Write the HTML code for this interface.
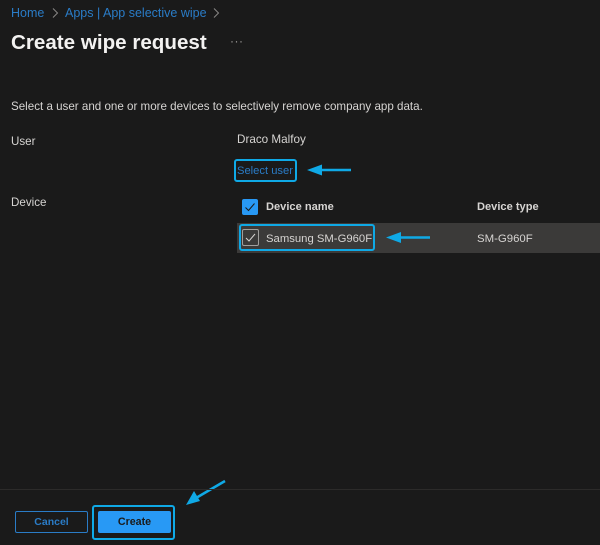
<!DOCTYPE html>
<html><head><meta charset="utf-8">
<style>
html,body{margin:0;padding:0;background:#1a1a1a;}
body{width:600px;height:545px;position:relative;overflow:hidden;font-family:"Liberation Sans",sans-serif;}
.t{position:absolute;white-space:nowrap;line-height:16px;font-size:11.6px;color:#d6d4d2;}
.b{position:absolute;box-sizing:border-box;}
</style></head>
<body>
<div class="t" style="left:11px;top:5px;font-size:12.5px;color:#2a7cc7;">Home</div>
<div class="t" style="left:65px;top:5px;font-size:12.5px;color:#2a7cc7;">Apps | App selective wipe</div>
<svg class="b" style="left:0;top:0" width="300" height="30"><path d="M53 8.500l4.500 4.500-4.500 4.500M214 8.500l4.500 4.500-4.500 4.500" fill="none" stroke="#8a8886" stroke-width="1"/></svg>
<div class="t" style="left:11px;top:30px;font-size:20.600px;line-height:26px;font-weight:bold;color:#f3f2f1;">Create wipe request</div>
<div class="t" style="left:230px;top:33px;font-size:12px;color:#a19f9d;letter-spacing:0.500px;">···</div>
<div class="t" style="left:11px;top:99px;">Select a user and one or more devices to selectively remove company app data.</div>
<div class="t" style="left:11px;top:134px;">User</div>
<div class="t" style="left:237px;top:131.500px;font-size:11.700px;">Draco Malfoy</div>
<div class="b" style="left:234px;top:159px;width:63px;height:23px;border:2px solid #0fa9e6;border-radius:3px;"></div>
<div class="t" style="left:237px;top:163px;font-size:11.200px;color:#2a7cc7;">Select user</div>
<div class="t" style="left:11px;top:195px;">Device</div>

<div class="b" style="left:242px;top:199px;width:16px;height:16px;background:#2899f5;border-radius:2px;"></div>
<svg class="b" style="left:242px;top:199px" width="16" height="16"><path d="M3.500 8.500l3 3 6-7" fill="none" stroke="#1a1a1a" stroke-width="1"/></svg>
<div class="t" style="left:266px;top:199px;font-size:11.100px;font-weight:bold;">Device name</div>
<div class="t" style="left:477px;top:199px;font-size:11.100px;font-weight:bold;">Device type</div>

<div class="b" style="left:237px;top:223px;width:363px;height:30px;background:#3b3a39;"></div>
<div class="b" style="left:239px;top:224px;width:136px;height:27px;border:2px solid #0fa9e6;border-radius:3px;"></div>
<div class="b" style="left:242px;top:229px;width:17px;height:17px;border:1px solid #a19f9d;border-radius:2px;"></div>
<svg class="b" style="left:242px;top:229px" width="17" height="17"><path d="M4 9l3 3 6-7" fill="none" stroke="#d6d4d2" stroke-width="1"/></svg>
<div class="t" style="left:266px;top:230.500px;font-size:11.300px;">Samsung SM-G960F</div>
<div class="t" style="left:477px;top:230.500px;font-size:11.400px;">SM-G960F</div>

<svg class="b" style="left:0;top:0" width="600" height="545">
<path d="M351 170H318" stroke="#0fa9e6" stroke-width="2.500" fill="none"/>
<path d="M307 170l15-5.500v11z" fill="#0fa9e6"/>
<path d="M430 237.500H397" stroke="#0fa9e6" stroke-width="2.500" fill="none"/>
<path d="M386 237.500l15-5.500v11z" fill="#0fa9e6"/>
<path d="M225 481L196 498" stroke="#0fa9e6" stroke-width="2.500" fill="none"/>
<path d="M186 505l8-14 6 10z" fill="#0fa9e6"/>
</svg>

<div class="b" style="left:0;top:489px;width:600px;height:1px;background:#2c2b2a;"></div>
<div class="b" style="left:15px;top:511px;width:73px;height:22px;border:1px solid #2a7cc7;border-radius:2px;"></div>
<div class="t" style="left:15px;top:514px;width:73px;text-align:center;font-size:10.500px;color:#2a7cc7;font-weight:bold;">Cancel</div>
<div class="b" style="left:92px;top:505px;width:83px;height:35px;border:2px solid #0fa9e6;border-radius:3px;"></div>
<div class="b" style="left:98px;top:511px;width:73px;height:22px;background:#2899f5;border-radius:2px;"></div>
<div class="t" style="left:98px;top:514px;width:73px;text-align:center;font-size:10.700px;color:#1a1a1a;font-weight:bold;">Create</div>
</body></html>
